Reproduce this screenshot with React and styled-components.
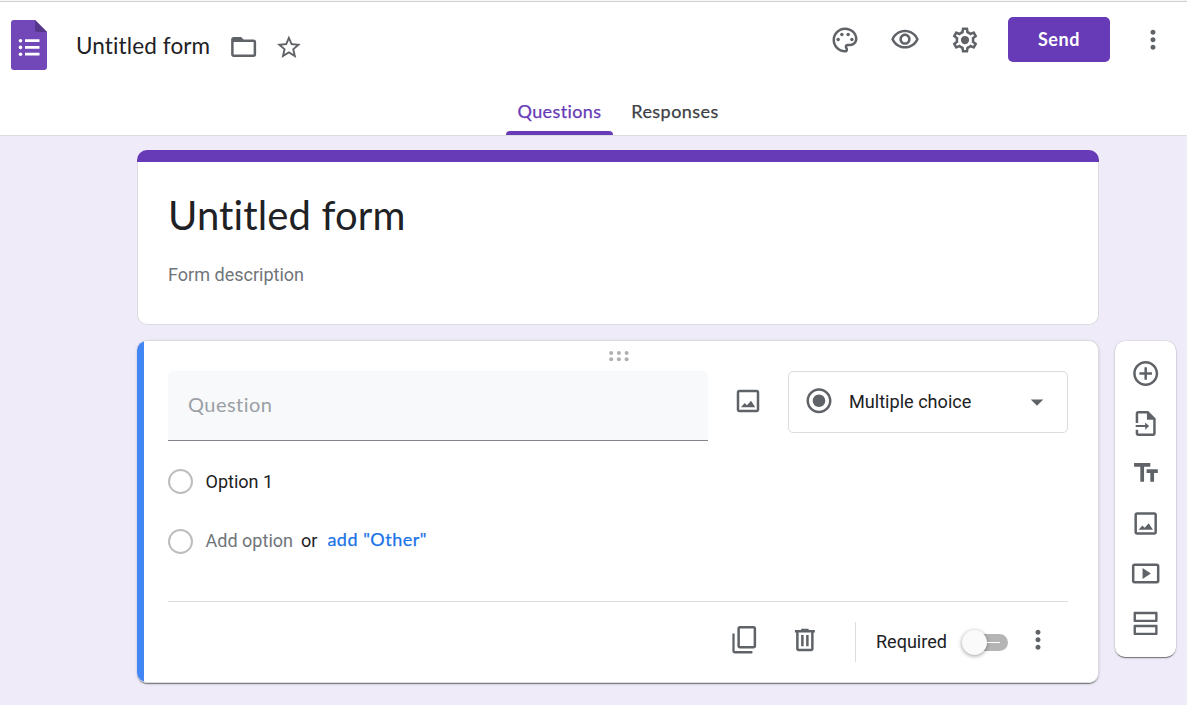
import React from 'react';
import styled, { createGlobalStyle } from 'styled-components';

const GlobalStyle = createGlobalStyle`
  * { box-sizing: border-box; }
  body { margin: 0; background: #efebf8; font-family: Roboto, "Liberation Sans", sans-serif; color: #202124; overflow: hidden; }
  button { font: inherit; color: inherit; border: 0; background: none; padding: 0; margin: 0; }
`;

const display = 'Lato, "Open Sans", sans-serif';
const purple = '#673ab7';

const Page = styled.div`
  width: 1187px;
  height: 705px;
  display: flex;
  flex-direction: column;
  background: #efebf8;
  overflow: hidden;
`;
const Header = styled.header`
  height: 136px;
  flex: none;
  display: flex;
  flex-direction: column;
  justify-content: space-between;
  background: #fff;
  border-bottom: 1px solid #dadce0;
`;
const TopLine = styled.div`
  height: 2px;
  background: #f7f7f7;
  border-bottom: 1px solid #d0d0d0;
`;
const TopBar = styled.div`
  display: flex;
  justify-content: space-between;
  align-items: flex-start;
  height: 88px;
  padding: 0 12px 0 11px;
`;
const FileInfo = styled.div`
  display: flex;
  align-items: center;
  height: 50px;
  margin-top: 18px;
`;
const FileName = styled.span`
  width: 136px;
  margin: 2px 17px 0 29px;
  font: 400 22.5px/30px ${display};
  letter-spacing: 0.12px;
  white-space: nowrap;
`;
const HeaderActions = styled.div`
  display: flex;
  align-items: center;
  height: 45px;
  margin-top: 15px;
`;
const IconButton = styled.button`
  width: ${(p) => p.$w || 60}px;
  height: ${(p) => p.$h || 50}px;
  padding-top: ${(p) => p.$pt || 0}px;
  flex: none;
  display: flex;
  align-items: center;
  justify-content: center;
`;
const SendButton = styled.button`
  width: 102px;
  height: 45px;
  margin: 0 20px 0 13px;
  border-radius: 5px;
  background: ${purple};
  color: #fff;
  font: 700 18px/44px ${display};
  letter-spacing: 0.6px;
  padding-bottom: 1px;
`;
const Tabs = styled.nav`
  display: flex;
  height: 45px;
  margin-left: 506px;
  gap: 6px;
`;
const Tab = styled.button`
  width: ${(p) => p.$w}px;
  display: flex;
  flex-direction: column;
  align-items: center;
  justify-content: space-between;
  padding-top: 9px;
  color: ${(p) => (p.$active ? purple : '#3c4043')};
  font: 400 18px/24px ${display};
  letter-spacing: ${(p) => p.$ls}px;
  -webkit-text-stroke: 0.25px currentColor;
  &::after {
    content: '';
    width: 100%;
    height: 4px;
    border-radius: 4px 4px 0 0;
    background: ${(p) => (p.$active ? purple : 'transparent')};
  }
`;
const Workspace = styled.main`
  display: flex;
  align-items: flex-end;
  gap: 16px;
  padding: 14px 10px 0 137px;
`;
const Column = styled.div`
  width: 962px;
  display: flex;
  flex-direction: column;
  gap: 15px;
`;
const TitleCard = styled.section`
  height: 175px;
  display: flex;
  flex-direction: column;
`;
const AccentBar = styled.div`
  height: 12px;
  border-radius: 10px 10px 0 0;
  background: ${purple};
`;
const TitleBody = styled.div`
  flex: 1;
  padding: 23px 30px 0;
  border: 1px solid #dadce0;
  border-top: 0;
  border-radius: 0 0 10px 10px;
  background: #fff;
`;
const FormTitle = styled.h1`
  margin: 0;
  font: 400 40px/60px ${display};
  letter-spacing: 0.12px;
`;
const FormDescription = styled.p`
  margin: 18px 0 0;
  font-size: 18.05px;
  line-height: 24px;
  color: #70757a;
`;
const lift = '0 2px 1px -1px rgba(0,0,0,.35), 0 1px 1px rgba(0,0,0,.14), 0 1px 3px rgba(0,0,0,.14)';
const QuestionCard = styled.section`
  height: 343px;
  border: 1px solid #dadce0;
  border-left: 0;
  border-radius: 10px;
  background: linear-gradient(to right, #4285f4 7px, #fff 7px) border-box;
  box-shadow: ${lift};
  padding: 0 30px 0 31px;
  display: flex;
  flex-direction: column;
`;
const DragRow = styled.div`
  height: 30px;
  display: flex;
  justify-content: center;
  align-items: center;
  padding-left: 1px;
`;
const QuestionRow = styled.div`
  display: flex;
  align-items: flex-start;
  height: 70px;
`;
const QuestionField = styled.div`
  width: 540px;
  height: 70px;
  padding-left: 20px;
  border-radius: 5px 5px 0 0;
  border-bottom: 1px solid #80868b;
  background: #f8f9fa;
  color: #9aa0a6;
  font: 400 20px/67px ${display};
  letter-spacing: 0.45px;
`;
const TypeSelect = styled.div`
  width: 280px;
  height: 62px;
  display: flex;
  align-items: center;
  padding: 0 15px 2px;
  border: 1px solid #dadce0;
  border-radius: 5px;
`;
const TypeLabel = styled.span`
  flex: 1;
  padding: 0 0 0 15px;
  font-size: 18.1px;
`;
const OptionRow = styled.div`
  display: flex;
  align-items: center;
  height: 60px;
  margin-top: ${(p) => p.$top || 0}px;
  font-size: 18.05px;
  line-height: 22px;
`;
const OptionText = styled.span`
  display: flex;
  align-items: flex-start;
  margin-top: ${(p) => p.$shift || 0}px;
`;
const RadioRing = styled.span`
  width: 25px;
  height: 25px;
  margin-right: 12.5px;
  border: 2px solid #bdbdbd;
  border-radius: 50%;
`;
const Muted = styled.span`
  color: #70757a;
  margin-right: 8px;
`;
const AddOther = styled.button`
  margin-left: 10px;
  color: #1a73e8;
  font: 400 18px/18px ${display};
  letter-spacing: 0.5px;
  -webkit-text-stroke: 0.25px currentColor;
`;
const Footer = styled.div`
  display: flex;
  align-items: center;
  justify-content: flex-end;
  height: 81px;
  margin-top: auto;
  border-top: 1px solid #dadce0;
`;
const VerticalRule = styled.span`
  width: 1px;
  height: 40px;
  margin: 0 20px;
  background: #dadce0;
`;
const RequiredLabel = styled.span`
  width: 86px;
  font-size: 18.05px;
  line-height: 22px;
`;
const Toggle = styled.span`
  width: 46px;
  height: 25px;
  display: flex;
  align-items: center;
`;
const Track = styled.span`
  width: 42px;
  height: 17px;
  margin-left: 4px;
  display: flex;
  align-items: center;
  border-radius: 9px;
  background: #b5b5b5;
`;
const Thumb = styled.span`
  width: 25px;
  height: 25px;
  flex: none;
  margin-left: -4px;
  border-radius: 50%;
  background: #fafafa;
  box-shadow: 0 1px 4px rgba(0,0,0,.4);
`;
const Dash = styled.span`
  width: 13px;
  height: 1px;
  background: #fff;
`;
const SideBar = styled.aside`
  width: 61px;
  height: 316px;
  margin-bottom: 26px;
  padding: 8px 0;
  display: flex;
  flex-direction: column;
  align-items: center;
  border-radius: 10px;
  background: #fff;
  box-shadow: ${lift}, 0 0 0 0.5px #dadce0;
`;
const Svg = styled.svg`
  display: block;
  flex: none;
  overflow: visible;
  fill: ${(p) => p.$fill || '#5f6368'};
`;

const paths = {
  folder: 'M20 6h-8l-2-2H4c-1.1 0-1.99.9-1.99 2L2 18c0 1.1.9 2 2 2h16c1.1 0 2-.9 2-2V8c0-1.1-.9-2-2-2zm0 12H4V8h16v10z',
  star: 'M22 9.24l-7.19-.62L12 2 9.19 8.63 2 9.24l5.46 4.73L5.82 21 12 17.27 18.18 21l-1.63-7.03L22 9.24zM12 15.4l-3.76 2.27 1-4.28-3.32-2.88 4.38-.38L12 6.1l1.71 4.04 4.38.38-3.32 2.88 1 4.28L12 15.4z',
  palette: 'M12 22C6.49 22 2 17.51 2 12S6.49 2 12 2s10 4.04 10 9c0 3.31-2.69 6-6 6h-1.77c-.28 0-.5.22-.5.5 0 .12.05.23.13.33.41.47.64 1.06.64 1.67A2.5 2.5 0 0 1 12 22zm0-18c-4.41 0-8 3.59-8 8s3.59 8 8 8c.28 0 .5-.22.5-.5a.54.54 0 0 0-.14-.35c-.41-.46-.63-1.05-.63-1.65a2.5 2.5 0 0 1 2.5-2.5H16c2.21 0 4-1.79 4-4 0-3.86-3.59-7-8-7z',
  eye: 'M12 6c3.79 0 7.17 2.13 8.82 5.5C19.17 14.87 15.79 17 12 17s-7.17-2.13-8.82-5.5C4.83 8.13 8.21 6 12 6m0-2C7 4 2.73 7.11 1 11.5 2.73 15.89 7 19 12 19s9.27-3.11 11-7.5C21.27 7.11 17 4 12 4zm0 5c1.38 0 2.5 1.12 2.5 2.5S13.38 14 12 14s-2.5-1.12-2.5-2.5S10.62 9 12 9m0-2c-2.48 0-4.5 2.02-4.5 4.5S9.52 16 12 16s4.5-2.02 4.5-4.5S14.48 7 12 7z',
  gear: 'M19.43 12.98c.04-.32.07-.64.07-.98 0-.34-.03-.66-.07-.98l2.11-1.65c.19-.15.24-.42.12-.64l-2-3.46c-.09-.16-.26-.25-.44-.25-.06 0-.12.01-.17.03l-2.49 1c-.52-.4-1.08-.73-1.69-.98l-.38-2.65C14.46 2.18 14.25 2 14 2h-4c-.25 0-.46.18-.49.42l-.38 2.65c-.61.25-1.17.59-1.69.98l-2.49-1c-.06-.02-.12-.03-.18-.03-.17 0-.34.09-.43.25l-2 3.46c-.13.22-.07.49.12.64l2.11 1.65c-.04.32-.07.65-.07.98 0 .33.03.66.07.98l-2.11 1.65c-.19.15-.24.42-.12.64l2 3.46c.09.16.26.25.44.25.06 0 .12-.01.17-.03l2.49-1c.52.4 1.08.73 1.69.98l.38 2.65c.03.24.24.42.49.42h4c.25 0 .46-.18.49-.42l.38-2.65c.61-.25 1.17-.59 1.69-.98l2.49 1c.06.02.12.03.18.03.17 0 .34-.09.43-.25l2-3.46c.12-.22.07-.49-.12-.64l-2.11-1.65zm-1.98-1.71c.04.31.05.52.05.73 0 .21-.02.43-.05.73l-.14 1.13.89.7 1.08.84-.7 1.21-1.27-.51-1.04-.42-.9.68c-.43.32-.84.56-1.25.73l-1.06.43-.16 1.13-.2 1.35h-1.4l-.19-1.35-.16-1.13-1.06-.43c-.43-.18-.83-.41-1.23-.71l-.91-.7-1.06.43-1.27.51-.7-1.21 1.08-.84.89-.7-.14-1.13c-.03-.31-.05-.54-.05-.74s.02-.43.05-.73l.14-1.13-.89-.7-1.08-.84.7-1.21 1.27.51 1.04.42.9-.68c.43-.32.84-.56 1.25-.73l1.06-.43.16-1.13.2-1.35h1.39l.19 1.35.16 1.13 1.06.43c.43.18.83.41 1.23.71l.91.7 1.06-.43 1.27-.51.7 1.21-1.07.85-.89.7.14 1.13z',
  more: 'M12 8c1.1 0 2-.9 2-2s-.9-2-2-2-2 .9-2 2 .9 2 2 2zm0 2c-1.1 0-2 .9-2 2s.9 2 2 2 2-.9 2-2-.9-2-2-2zm0 6c-1.1 0-2 .9-2 2s.9 2 2 2 2-.9 2-2-.9-2-2-2z',
  image: 'M19 5v14H5V5h14m0-2H5c-1.1 0-2 .9-2 2v14c0 1.1.9 2 2 2h14c1.1 0 2-.9 2-2V5c0-1.1-.9-2-2-2zM6.3 16.9l3.1-3.4 1.8 1.8 3.2-3.5 3.4 5.1z',
  radio: 'M12 7c-2.76 0-5 2.24-5 5s2.24 5 5 5 5-2.24 5-5-2.24-5-5-5zm0-5C6.48 2 2 6.48 2 12s4.48 10 10 10 10-4.48 10-10S17.52 2 12 2zm0 18c-4.42 0-8-3.58-8-8s3.58-8 8-8 8 3.58 8 8-3.58 8-8 8z',
  drop: 'M7 10.8l5 5 5-5z',
  add: 'M13 7h-2v4H7v2h4v4h2v-4h4v-2h-4V7zm-1-5C6.48 2 2 6.48 2 12s4.48 10 10 10 10-4.48 10-10S17.52 2 12 2zm0 18c-4.41 0-8-3.59-8-8s3.59-8 8-8 8 3.59 8 8-3.59 8-8 8z',
  importDoc: 'M14 2H6c-1.1 0-2 .9-2 2v7.5h2V4h7v5h5v11H6v-3H4v3c0 1.1.9 2 2 2h12c1.1 0 2-.9 2-2V8l-6-6zM4 13.2h7.6v-2.1l3.2 2.9-3.2 2.9v-2.1H4z',
  text: 'M2.7 3.6v3h5v12h3v-12h5v-3h-13zm19 5h-9v3h3v7h3v-7h3v-3z',
  video: 'M9.5 7.6v8.8l6.6-4.4zM21 4H3c-1.1 0-2 .9-2 2v12c0 1.1.9 2 2 2h18c1.1 0 2-.9 2-2V6c0-1.1-.9-2-2-2zm0 14H3V6h18v12z',
  section: 'M20.6 13H3.2c-.5 0-.9.45-.9 1v6.2c0 .55.4 1 .9 1h17.4c.5 0 .9-.45.9-1V14c0-.55-.4-1-.9-1zm-1 6.3H4.2v-4.4h15.4v4.4zM20.6 2.6H3.2c-.5 0-.9.45-.9 1v6.2c0 .55.4 1 .9 1h17.4c.5 0 .9-.45.9-1V3.6c0-.55-.4-1-.9-1zm-1 6.3H4.2V4.5h15.4v4.4z',
  copy: 'M20 1H9c-1.1 0-2 .9-2 2v14c0 1.1.9 2 2 2h11c1.1 0 2-.9 2-2V3c0-1.1-.9-2-2-2zm0 16H9V3h11v14zM4.8 7H3v14c0 1.1.9 2 2 2H19v-2H4.8V7z',
  trash: 'M15 4V3H9v1H4v2h1v13c0 1.1.9 2 2 2h10c1.1 0 2-.9 2-2V6h1V4h-5zm2 15H7V6h10v13zM9 8h2v9H9zm4 0h2v9h-2z',
};

function Icon({ name, size = 30, x = 0, y = 0, children }) {
  return (
    <Svg width={size} height={size} viewBox={`${x} ${y} 24 24`}>
      <path d={paths[name]} />
      {children}
    </Svg>
  );
}

function Logo() {
  return (
    <Svg width="36" height="50" viewBox="0 0 36 50">
      <path fill="#7248b9" d="M3 0h21l12 12v35a3 3 0 0 1-3 3H3a3 3 0 0 1-3-3V3a3 3 0 0 1 3-3z" />
      <path fill="#56368a" d="M24 0l12 12H26a2 2 0 0 1-2-2z" />
      <g fill="#fff">
        <path d="M14 19.3h14.5v2.8H14zM14 26h14.5v2.8H14zM14 32.8h14.5v2.8H14z" />
        <circle cx="9.5" cy="20.7" r="1.8" />
        <circle cx="9.5" cy="27.4" r="1.8" />
        <circle cx="9.5" cy="34.2" r="1.8" />
      </g>
    </Svg>
  );
}

function DragDots() {
  return (
    <Svg width="20" height="12" viewBox="0 0 20 12" $fill="#b0b0b0">
      {[2.2, 9.9, 17.6].map((x) => (
        <React.Fragment key={x}>
          <circle cx={x} cy="3" r="2" />
          <circle cx={x} cy="9.2" r="2" />
        </React.Fragment>
      ))}
    </Svg>
  );
}

const tools = ['add', 'importDoc', 'text', 'image', 'video', 'section'];

export default function App() {
  return (
    <Page>
      <GlobalStyle />
      <Header>
        <TopLine />
        <TopBar>
          <FileInfo>
            <Logo />
            <FileName>Untitled form</FileName>
            <IconButton $w={30} $pt={4}><Icon name="folder" x={0.3} /></IconButton>
            <IconButton $w={60} $pt={5}><Icon name="star" size={28.5} x={0.3} /></IconButton>
          </FileInfo>
          <HeaderActions>
            <IconButton>
              <Icon name="palette">
                <circle cx="6.5" cy="11.5" r="1.4" />
                <circle cx="9.5" cy="7.5" r="1.4" />
                <circle cx="14.5" cy="7.5" r="1.4" />
                <circle cx="17.5" cy="11.5" r="1.4" />
              </Icon>
            </IconButton>
            <IconButton><Icon name="eye" y={0.2} /></IconButton>
            <IconButton><Icon name="gear"><circle cx="12" cy="12" r="3.3" /></Icon></IconButton>
            <SendButton>Send</SendButton>
            <IconButton $w={45}><Icon name="more" y={0.3} /></IconButton>
          </HeaderActions>
        </TopBar>
        <Tabs>
          <Tab $active $w={107} $ls={0.4}>Questions</Tab>
          <Tab $w={112} $ls={0.45}>Responses</Tab>
        </Tabs>
      </Header>
      <Workspace>
        <Column>
          <TitleCard>
            <AccentBar />
            <TitleBody>
              <FormTitle>Untitled form</FormTitle>
              <FormDescription>Form description</FormDescription>
            </TitleBody>
          </TitleCard>
          <QuestionCard>
            <DragRow><DragDots /></DragRow>
            <QuestionRow>
              <QuestionField>Question</QuestionField>
              <IconButton $w={80} $h={60}><Icon name="image" /></IconButton>
              <TypeSelect>
                <Icon name="radio" y={0.3} />
                <TypeLabel>Multiple choice</TypeLabel>
                <Icon name="drop" />
              </TypeSelect>
            </QuestionRow>
            <OptionRow $top={10}><RadioRing /><OptionText $shift={1}>Option 1</OptionText></OptionRow>
            <OptionRow>
              <RadioRing />
              <OptionText $shift={-1}>
                <Muted>Add option</Muted>
                or
                <AddOther>add "Other"</AddOther>
              </OptionText>
            </OptionRow>
            <Footer>
              <IconButton $h={46}><Icon name="copy" x={1.1} y={1.8} /></IconButton>
              <IconButton $h={46}><Icon name="trash" x={0.1} y={1.7} /></IconButton>
              <VerticalRule />
              <RequiredLabel>Required</RequiredLabel>
              <Toggle><Track><Thumb /><Dash /></Track></Toggle>
              <IconButton $h={46}><Icon name="more" y={1.9} /></IconButton>
            </Footer>
          </QuestionCard>
        </Column>
        <SideBar>
          {tools.map((name) => (
            <IconButton key={name}><Icon name={name} x={0.25} y={0.4} /></IconButton>
          ))}
        </SideBar>
      </Workspace>
    </Page>
  );
}
